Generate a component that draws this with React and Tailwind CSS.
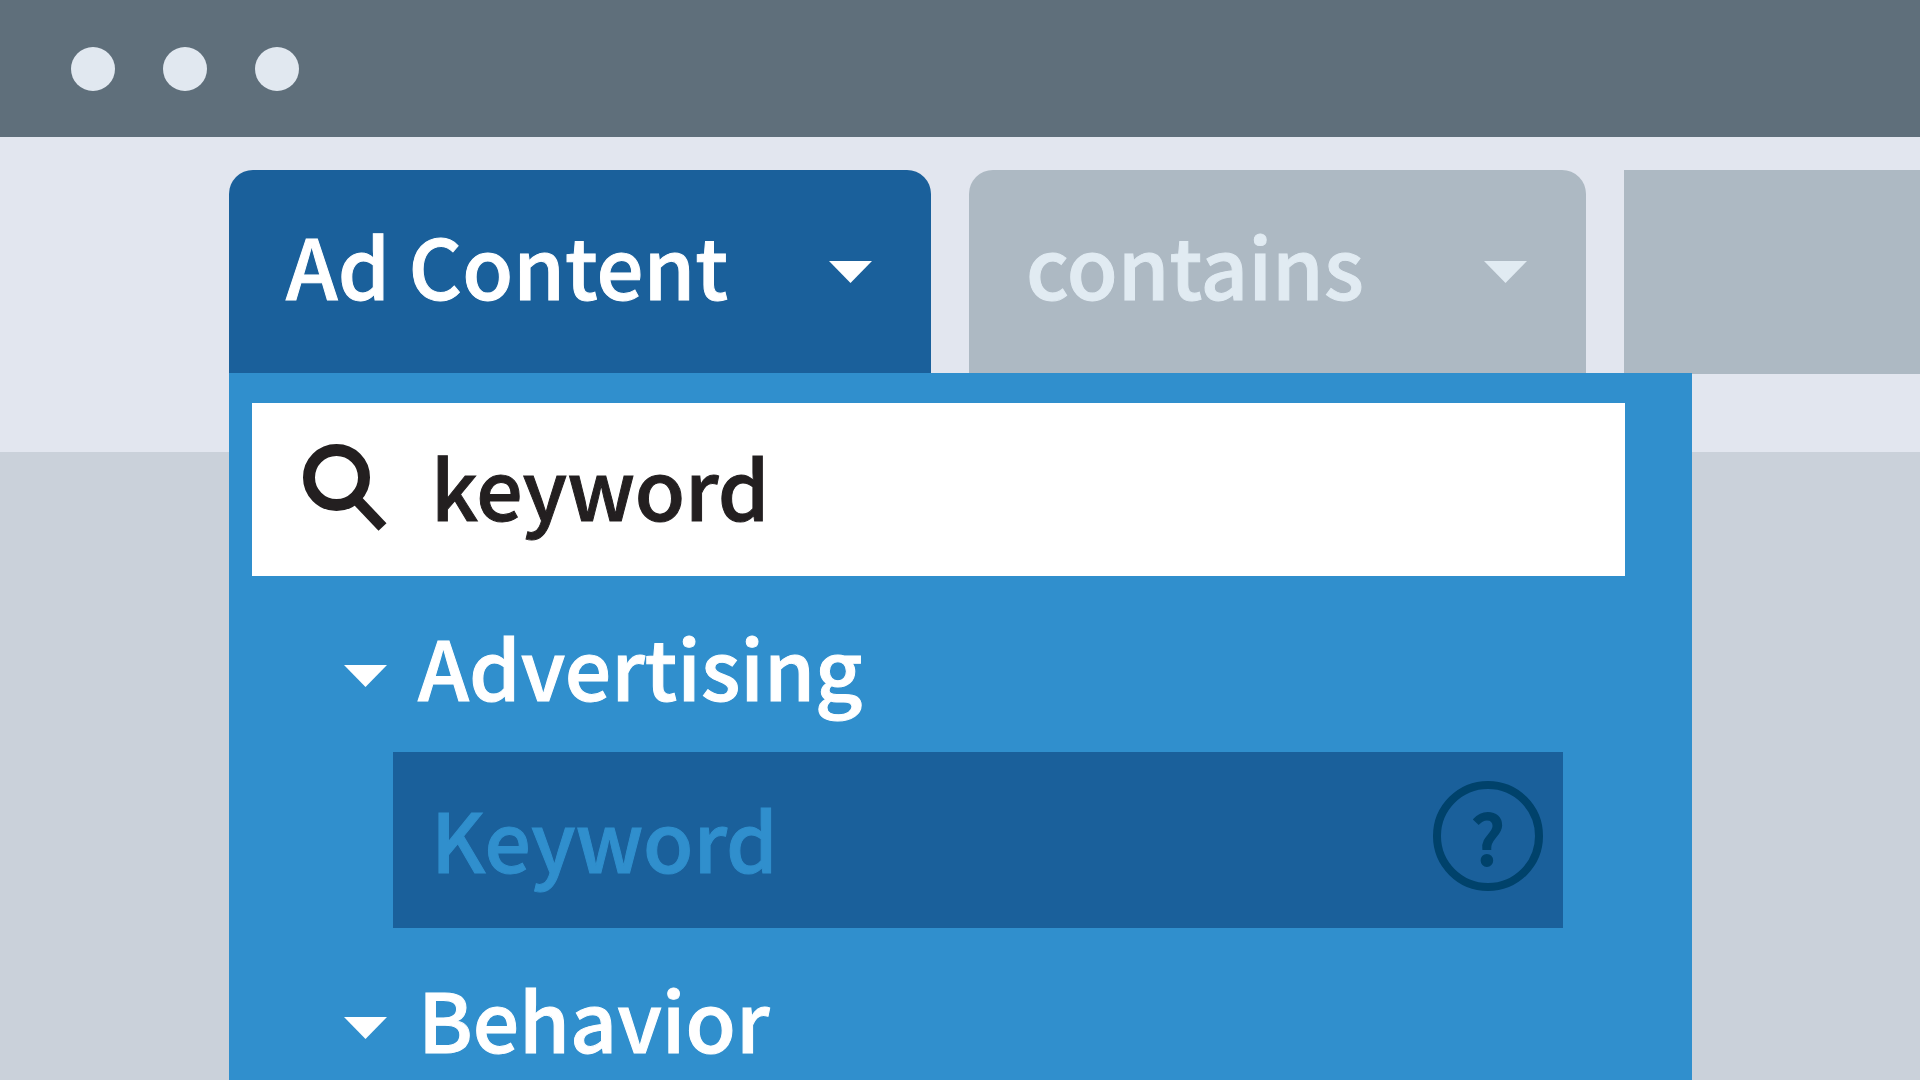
import React, { useState } from "react";

function Caret({ className = "" }) {
  return (
    <svg viewBox="0 0 44 22" className={`h-[22px] w-[44px] shrink-0 fill-current ${className}`} aria-hidden="true">
      <path d="M0 0h43L21.500 22z" />
    </svg>
  );
}

function SearchIcon() {
  return (
    <svg viewBox="0 0 84 88" className="mb-1 h-[88px] w-[84px] shrink-0" fill="none" stroke="currentColor" aria-hidden="true">
      <circle cx="33.5" cy="33.5" r="27.5" strokeWidth="12" />
      <path d="M52 54 79.5 83" strokeWidth="11" />
    </svg>
  );
}

function WindowBar() {
  return (
    <header className="flex h-[137px] shrink-0 items-center gap-12 bg-[#5f6f7b] px-[71px]">
      <span className="size-11 rounded-full bg-[#e1e8f0]" />
      <span className="size-11 rounded-full bg-[#e1e8f0]" />
      <span className="size-11 rounded-full bg-[#e1e8f0]" />
    </header>
  );
}

function Group({ label, open, onToggle, children }) {
  return (
    <section>
      <button type="button" aria-expanded={open} onClick={onToggle} className="flex h-[176px] w-full items-center gap-[30px] pl-[115px] text-left text-white">
        <Caret className="mt-6" />
        <span className="mt-1">{label}</span>
      </button>
      {open ? children : null}
    </section>
  );
}

function App() {
  const [search, setSearch] = useState("keyword");
  const [open, setOpen] = useState({ advertising: true, behavior: true });

  const toggle = (key) => setOpen((prev) => ({ ...prev, [key]: !prev[key] }));

  return (
    <div className="flex h-screen flex-col overflow-hidden bg-[#cad1da] font-['Noto_Sans_CJK_SC',sans-serif] text-[82px] leading-[120px] font-medium [-webkit-text-stroke:1px]">
      <WindowBar />
      <div className="h-[315px] shrink-0 bg-[#e2e6ef] pt-[33px]">
        <div className="relative flex h-[204px] gap-[38px] pl-[229px] text-[83px]">
          <button type="button" aria-haspopup="true" aria-expanded="true" className="flex w-[702px] shrink-0 items-center justify-between rounded-t-3xl bg-[#1a609b] pr-[58px] pl-[57px] text-white">
            <span className="-mt-4">Ad Content</span>
            <Caret />
          </button>
          <button type="button" aria-haspopup="true" className="flex w-[617px] shrink-0 items-center justify-between rounded-t-3xl bg-[#adb9c3] pr-[58px] pl-[57px] text-[#e1ebf2]">
            <span className="-mt-4">contains</span>
            <Caret />
          </button>
          <div className="flex-1 bg-[#adb9c3]" />

          <div className="absolute top-[203px] right-[228px] left-[229px] bg-[#308fcd] pt-[30px] text-[82px]">
            <label className="mr-[67px] ml-[23px] flex h-[173px] items-center gap-11 bg-white pl-[51px] text-[#231f20]">
              <SearchIcon />
              <input
                value={search}
                onChange={(e) => setSearch(e.target.value)}
                aria-label="Search dimensions"
                className="mb-2 min-w-0 flex-1 bg-transparent outline-none"
              />
            </label>
            <Group label="Advertising" open={open.advertising} onToggle={() => toggle("advertising")}>
              <div className="mr-[129px] ml-[164px] flex h-[176px] items-center justify-between bg-[#1a609b] pr-5 pl-[38px]">
                <a href="#keyword" className="mb-1 text-[#308fcd]">
                  Keyword
                </a>
                <button type="button" aria-label="Help" className="mb-2 flex size-[110px] items-center justify-center rounded-full border-8 border-[#00426b] text-[#00426b]">
                  <span className="text-[68px] leading-none [-webkit-text-stroke:2px]">?</span>
                </button>
              </div>
            </Group>
            <Group label="Behavior" open={open.behavior} onToggle={() => toggle("behavior")} />
          </div>
        </div>
      </div>
    </div>
  );
}

export default App;
